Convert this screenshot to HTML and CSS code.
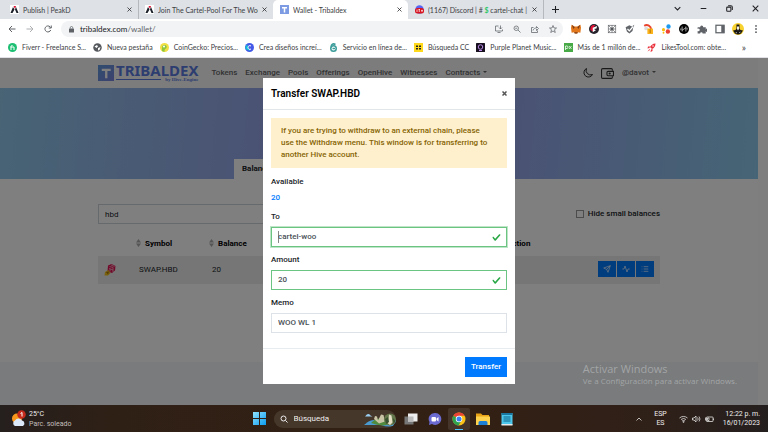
FILE: index.html
```html
<!DOCTYPE html>
<html lang="es">
<head>
  <meta charset="UTF-8">
  <title>Wallet - Tribaldex</title>
  <link rel="stylesheet" href="styles.css">
</head>
<body>
  <!-- browser tabs -->
  <div class="tab-strip">
    <div class="tab">
      <svg class="favicon" viewBox="0 0 18 18"><rect width="18" height="18" fill="#fff"/><path d="M7 2h5l-2 6z" fill="#e31337"/><path d="M6 4l3 5-4 7H1zM12 4l5 12h-4l-3-7z" fill="#1b1f28"/></svg>
      <span class="tab-title">Publish | PeakD</span>
      <button class="tab-close" aria-label="Cerrar"><svg viewBox="0 0 10 10"><path d="M1 1l8 8M9 1l-8 8"/></svg></button>
    </div>
    <div class="tab divided">
      <svg class="favicon" viewBox="0 0 18 18"><rect width="18" height="18" fill="#fff"/><path d="M7 2h5l-2 6z" fill="#e31337"/><path d="M6 4l3 5-4 7H1zM12 4l5 12h-4l-3-7z" fill="#1b1f28"/></svg>
      <span class="tab-title">Join The Cartel-Pool For The Woo</span>
      <button class="tab-close" aria-label="Cerrar"><svg viewBox="0 0 10 10"><path d="M1 1l8 8M9 1l-8 8"/></svg></button>
    </div>
    <div class="tab active">
      <svg class="favicon" viewBox="0 0 18 18"><rect width="18" height="18" fill="#7c9be2"/><path d="M4 4h10v3h-3.500v8h-3v-8H4z" fill="#fff"/></svg>
      <span class="tab-title">Wallet - Tribaldex</span>
      <button class="tab-close" aria-label="Cerrar"><svg viewBox="0 0 10 10"><path d="M1 1l8 8M9 1l-8 8"/></svg></button>
    </div>
    <div class="tab">
      <svg class="favicon" viewBox="0 0 18 18"><circle cx="9" cy="9" r="8.500" fill="#5865f2"/><rect y="6" width="18" height="11" rx="5" fill="#d8141f"/><path d="M4 9v5M7 9h3M8.500 9v5M12 11.500h4M14 9.500v4" stroke="#fff" stroke-width="1.500"/></svg>
      <span class="tab-title">(1167) Discord | # <b class="dollar">$</b> cartel-chat |</span>
      <button class="tab-close" aria-label="Cerrar"><svg viewBox="0 0 10 10"><path d="M1 1l8 8M9 1l-8 8"/></svg></button>
    </div>
    <button class="new-tab" aria-label="Nueva pestaña"><svg viewBox="0 0 10 10"><path d="M5 0v10M0 5h10"/></svg></button>
    <div class="window-controls">
      <button aria-label="Buscar pestañas"><svg viewBox="0 0 10 10"><path d="M1 3l4 4 4-4"/></svg></button>
      <button aria-label="Minimizar"><svg viewBox="0 0 10 10"><path d="M1 5h8"/></svg></button>
      <button aria-label="Restaurar"><svg viewBox="0 0 10 10"><rect x="1" y="3" width="6" height="6" rx="1"/><path d="M3 1h4a2 2 0 0 1 2 2v4"/></svg></button>
      <button aria-label="Cerrar ventana"><svg viewBox="0 0 10 10"><path d="M1 1l8 8M9 1l-8 8"/></svg></button>
    </div>
  </div>

  <!-- address bar -->
  <div class="toolbar">
    <button class="tool" aria-label="Atrás"><svg viewBox="0 0 16 16"><path d="M15 8H2M8 2L2 8l6 6"/></svg></button>
    <button class="tool muted" aria-label="Adelante"><svg viewBox="0 0 16 16"><path d="M1 8h13M8 2l6 6-6 6"/></svg></button>
    <button class="tool" aria-label="Recargar"><svg viewBox="0 0 16 16"><path d="M13.500 10A6 6 0 1 1 12 3.500L14 5.500M14.500 1v5h-5"/></svg></button>
    <div class="omnibox">
      <svg class="lock" viewBox="0 0 10 14"><rect x="0" y="5" width="10" height="8" rx="1" fill="#5f6368"/><path d="M2.500 5V3.500a2.500 2.500 0 0 1 5 0V5" fill="none" stroke="#5f6368" stroke-width="1.500"/></svg>
      <div class="url" role="textbox" aria-label="Dirección">tribaldex.com<span>/wallet/</span></div>
      <button class="tool" aria-label="Instalar"><svg viewBox="0 0 16 16"><path d="M7 2H1v10h14V9M5 15h6M11 1v7M8 5l3 3 3-3"/></svg></button>
      <button class="tool" aria-label="Zoom"><svg viewBox="0 0 16 16"><circle cx="6.500" cy="6.500" r="4.500"/><path d="M10 10l5 5M4.500 6.500h4"/></svg></button>
      <button class="tool" aria-label="Compartir"><svg viewBox="0 0 16 16"><path d="M5 5H1v10h12v-4M4 11c1-4 4-5 7-5V3l4 4-4 4V8"/></svg></button>
      <button class="tool" aria-label="Favorito"><svg viewBox="0 0 16 16"><path d="M8 1l2 5h5l-4 3.500 1.500 5.500L8 12l-4.500 3L5 9.500 1 6h5z"/></svg></button>
    </div>
    <div class="extensions">
      <svg viewBox="0 0 16 16"><path d="M1 1l5 3h4l5-3 1 5-1 8-4-1-1 2H6l-1-2-4 1-1-8z" fill="#e2761b"/><path d="M1 1l5 4-2 3zM15 1l-5 4 2 3zM5 13h6l-1 2H6z" fill="#7a3c18"/></svg>
      <svg viewBox="0 0 16 16"><circle cx="8" cy="8" r="8" fill="#25222b"/><path d="M3 4q3-3 7-2l-3 4-1 6-4-3z" fill="#e31337"/><path d="M6 6l7-3-1 4-4 1 3 2-5 3z" fill="#fff"/></svg>
      <svg viewBox="0 0 16 16" fill="none" stroke="#55585c"><rect x="2" y="2" width="12" height="12"/><circle cx="8" cy="8" r="2" fill="#55585c"/><path d="M2 8h12M8 2v12M3 3l10 10M13 3L3 13"/></svg>
      <svg viewBox="0 0 16 16"><path d="M1 5l6-3 4 2 4-3-2 5-1 5-5 4-4-3z" fill="#62666a"/><path d="M4 8l3 3 6-7" fill="none" stroke="#fff" stroke-width="2"/></svg>
      <svg viewBox="0 0 16 16"><path d="M2 3a7 7 0 0 1 11 6" fill="none" stroke="#e9442e" stroke-width="3"/><circle cx="5" cy="7" r="3" fill="#ddd"/><rect x="7" y="7" width="9" height="9" rx="1" fill="#fbb31b"/><path d="M11.500 8.500v6" stroke="#7a4b00"/></svg>
      <svg viewBox="0 0 16 16"><circle cx="12" cy="4" r="3.500" fill="#1d9bf0"/><circle cx="4" cy="9" r="2.500" fill="#fbbc05"/><circle cx="11" cy="12" r="3.500" fill="#ea4335"/><circle cx="4" cy="14" r="1.500" fill="#fbbc05"/></svg>
      <svg viewBox="0 0 16 16"><circle cx="8" cy="8" r="8" fill="#000"/><path d="M5 4v8M11 4v8M5 10l6-4M3 7v3M13 6v3" stroke="#fff"/></svg>
      <svg viewBox="0 0 16 16"><path d="M1 5h4a2.500 2.500 0 1 1 5 0h4v4a2.500 2.500 0 1 1 0 2v4H9a2 2 0 1 0-4 0H1v-4a2 2 0 1 0 0-3z" fill="#5f6368"/></svg>
      <svg viewBox="0 0 16 16"><rect x="1.500" y="2" width="13" height="12" fill="none" stroke="#5f6368" stroke-width="2"/><path d="M10 2h5v12h-5z" fill="#5f6368"/></svg>
      <svg class="avatar" viewBox="0 0 24 24"><circle cx="12" cy="12" r="12" fill="#f8d22e"/><path d="M9 3h6v8l2 3 5 1-4 6q-6 4-12 0l-4-6 5-1 2-3z" fill="#171514"/><path d="M10 7h4v5l-2 3-2-3zM7 18l3 1-1 2zM17 17l-3 2 2 1z" fill="#f3eee0"/></svg>
      <svg viewBox="0 0 16 16" fill="#5f6368"><circle cx="8" cy="3" r="1.500"/><circle cx="8" cy="8" r="1.500"/><circle cx="8" cy="13" r="1.500"/></svg>
    </div>
  </div>

  <!-- bookmarks -->
  <div class="bookmarks">
    <a href="#"><svg viewBox="0 0 18 18"><circle cx="9" cy="9" r="9" fill="#1dbf73"/><path d="M6 14V7q0-2 3-2M5 8h7v6" fill="none" stroke="#fff" stroke-width="2"/></svg>Fiverr - Freelance S...</a>
    <a href="#"><svg viewBox="0 0 18 18"><circle cx="9" cy="9" r="8.500" fill="#55595e"/><path d="M3 7l5-3 2 3-3 3zM10 10l5-2-2 6-3 1z" fill="#fff"/></svg>Nueva pestaña</a>
    <a href="#"><svg viewBox="0 0 18 18"><circle cx="9" cy="9" r="9" fill="#f2df43"/><path d="M4 16c0-9 0-12 5-12 4 0 6 4 3 7-3 1-3 3-3 7z" fill="#8dc63f"/><circle cx="8" cy="7" r="2" fill="#fff"/></svg>CoinGecko: Precios...</a>
    <a href="#"><svg viewBox="0 0 18 18"><circle cx="9" cy="9" r="9" fill="#4459e8"/><path d="M1 12a9 9 0 0 1 3-9l6 13z" fill="#12bfd5"/><path d="M12 6c-3-2-6 0-6 3s3 5 6 3" fill="none" stroke="#fff" stroke-width="2"/></svg>Crea diseños increí...</a>
    <a href="#"><svg viewBox="0 0 18 18"><circle cx="9" cy="11" r="5.500" fill="none" stroke="#3b9c9a" stroke-width="3"/><path d="M5 9c-2-6 3-9 8-6M7 11h5" fill="none" stroke="#3b9c9a" stroke-width="3"/></svg>Servicio en línea de...</a>
    <a href="#"><svg viewBox="0 0 18 18"><rect width="18" height="18" fill="#ffd91c"/><path d="M4 5h4v3H4zM10 5h4v3h-4zM4 10h4v3H4zM10 10h4v3h-4z" fill="#222"/></svg>Búsqueda CC</a>
    <a href="#"><svg viewBox="0 0 18 18"><rect width="18" height="18" rx="1" fill="#18101f"/><circle cx="9" cy="8" r="4.500" fill="none" stroke="#b78be6" stroke-width="2"/><path d="M6 15h6" stroke="#b78be6" stroke-width="2"/></svg>Purple Planet Music...</a>
    <a href="#"><svg viewBox="0 0 18 18"><rect width="18" height="18" fill="#48a947"/><path d="M3 14V6h3q2 0 2 2.500T6 11H3M10 6l5 6M15 6l-5 6" fill="none" stroke="#fff" stroke-width="1.500"/></svg>Más de 1 millón de...</a>
    <a href="#"><svg viewBox="0 0 18 18"><path d="M17 1c-6 0-9 4-11 7l4 4c4-2 7-5 7-11zM6 7H2l-1 4 4-1zM11 12v4l-4 2 1-5zM5 12l-4 5 5-3z" fill="#e9313c"/><circle cx="12" cy="6" r="1.500" fill="#fff"/></svg>LikesTool.com: obte...</a>
    <button class="more" aria-label="Más marcadores">»</button>
  </div>

  <!-- web page -->
  <div class="viewport">
    <div class="site">
      <header class="site-header">
        <div class="container nav">
          <a class="brand" href="#">
            <svg viewBox="0 0 34 34"><defs><linearGradient id="brandFill" x1="0" y1="0" x2="1" y2="1"><stop offset="0" stop-color="#5f9be0"/><stop offset="1" stop-color="#7c84dc"/></linearGradient></defs><rect width="34" height="34" fill="url(#brandFill)"/><path d="M8 8h19v5h-7v15h-5V13H8z" fill="#fff"/></svg>
            <span class="brand-text">
              <span class="brand-name">TRIBALDEX</span>
              <span class="brand-sub">by Hive-Engine</span>
            </span>
          </a>
          <nav class="links">
            <a href="#">Tokens</a>
            <a href="#">Exchange</a>
            <a href="#">Pools</a>
            <a href="#">Offerings</a>
            <a href="#">OpenHive</a>
            <a href="#">Witnesses</a>
            <a class="caret" href="#">Contracts</a>
          </nav>
          <div class="account">
            <button aria-label="Dark mode"><svg class="moon" viewBox="0 0 20 20"><path d="M7 1a9 9 0 1 0 12 12A9 9 0 0 1 7 1z"/></svg></button>
            <button aria-label="Wallet"><svg class="wallet" viewBox="0 0 24 20"><path d="M21 5V3q0-2-2-2H3Q1 1 1 3v14q0 2 2 2h16q2 0 2-2v-2"/><path d="M23 6H13q-2 0-2 2v4q0 2 2 2h10z"/><circle cx="16" cy="10" r="1"/></svg></button>
            <a class="caret" href="#">@davot</a>
          </div>
        </div>
      </header>

      <div class="banner">
        <div class="page-tabs">
          <a class="page-tab" href="#">Balances</a>
        </div>
      </div>

      <main class="container wallet-page">
        <div class="filters">
          <input class="filter-input" type="text" value="hbd" aria-label="Filter tokens">
          <label class="small-toggle"><input type="checkbox"> Hide small balances</label>
        </div>
        <table class="balances">
          <thead>
            <tr>
              <th class="col-icon"></th>
              <th class="col-symbol"><svg class="sort" viewBox="0 0 10 16"><path d="M5 0l5 7H0zM0 9h10l-5 7z"/></svg>Symbol</th>
              <th class="col-balance"><svg class="sort" viewBox="0 0 10 16"><path d="M5 0l5 7H0zM0 9h10l-5 7z"/></svg>Balance</th>
              <th class="col-action">Action</th>
            </tr>
          </thead>
          <tbody>
            <tr>
              <td><svg class="token" viewBox="0 0 24 24"><path d="M8 3l7-3 8 4-1 9-6 5-9-3z" fill="#e31354"/><path d="M11 5l7 2M10 9l8 3M14 2l7 3M18 7v9M12 9v6" stroke="#f7c9d6" stroke-width="1.500"/><path d="M2 16l7-4 4 6-5 5H1z" fill="#f5c21b"/><path d="M4 16l6-1-2 6z" fill="#a97600"/></svg></td>
              <td class="symbol">SWAP.HBD</td>
              <td class="balance">20</td>
              <td class="actions">
                <button aria-label="Transfer"><svg viewBox="0 0 24 24"><path d="M22 2L11 13M22 2l-7 20-4-9-9-4z"/></svg></button>
                <button aria-label="Activity"><svg viewBox="0 0 24 24"><path d="M1 12h5l3-9 6 18 3-9h5"/></svg></button>
                <button aria-label="Details"><svg viewBox="0 0 24 24"><path d="M8 5h14M8 12h14M8 19h14M2 5h2M2 12h2M2 19h2"/></svg></button>
              </td>
            </tr>
          </tbody>
        </table>
      </main>
      <footer class="site-footer"></footer>
    </div>
    <div class="scrollbar"></div>

    <div class="backdrop">
      <form class="modal" role="dialog" aria-labelledby="modalTitle">
        <div class="modal-header">
          <h5 id="modalTitle">Transfer SWAP.HBD</h5>
          <button class="close" type="button" aria-label="Close"><svg viewBox="0 0 10 10"><path d="M1 1l8 8M9 1l-8 8"/></svg></button>
        </div>
        <div class="modal-body">
          <div class="alert">If you are trying to withdraw to an external chain, please use the Withdraw menu. This window is for transferring to another Hive account.</div>
          <div class="form-group">
            <span class="label">Available</span>
            <a class="available" href="#">20</a>
          </div>
          <div class="form-group">
            <label for="to">To</label>
            <div class="field valid focused">
              <input id="to" type="text" value="cartel-woo">
              <svg viewBox="0 0 8 8"><path d="M2.300 6.730L.6 4.530c-.4-1.040.46-1.400 1.100-.8l1.100 1.400 3.400-3.800c.6-.63 1.600-.27 1.200.7l-4 4.600c-.43.500-.8.400-1.100.1z"/></svg>
            </div>
          </div>
          <div class="form-group">
            <label for="amount">Amount</label>
            <div class="field valid">
              <input id="amount" type="text" value="20">
              <svg viewBox="0 0 8 8"><path d="M2.300 6.730L.6 4.530c-.4-1.040.46-1.400 1.100-.8l1.100 1.400 3.400-3.800c.6-.63 1.600-.27 1.200.7l-4 4.600c-.43.500-.8.400-1.100.1z"/></svg>
            </div>
          </div>
          <div class="form-group">
            <label for="memo">Memo</label>
            <div class="field">
              <input id="memo" type="text" value="WOO WL 1">
            </div>
          </div>
        </div>
        <div class="modal-footer">
          <button class="btn-primary" type="button">Transfer</button>
        </div>
      </form>
    </div>

    <div class="activation">
      <div class="activation-title">Activar Windows</div>
      <div>Ve a Configuración para activar Windows.</div>
    </div>
  </div>

  <!-- taskbar -->
  <div class="taskbar">
    <div class="weather">
      <svg viewBox="0 0 30 34"><circle cx="12" cy="17" r="10" fill="#f7981d"/><path d="M8 32a6 6 0 0 1 0-11 8 8 0 0 1 14 0 6 6 0 0 1 2 11z" fill="#dbe9fb"/><circle cx="21" cy="9" r="8.500" fill="#c42b1c"/><path d="M19 7l3-2v8" fill="none" stroke="#fff" stroke-width="2"/></svg>
      <div>25°C<br><span class="sky">Parc. soleado</span></div>
    </div>
    <div class="apps">
      <svg class="start" viewBox="0 0 26 26"><defs><linearGradient id="startFill" x1="0" y1="0" x2="1" y2="1"><stop offset="0" stop-color="#8fe3ff"/><stop offset="1" stop-color="#0a9bf0"/></linearGradient></defs><path d="M0 0h12v12H0zM14 0h12v12H14zM0 14h12v12H0zM14 14h12v12H14z" fill="url(#startFill)"/></svg>
      <div class="search">
        <svg class="lens" viewBox="0 0 16 16"><circle cx="7" cy="7" r="5"/><path d="M11 11l4 4"/></svg>
        <input type="text" value="Búsqueda" aria-label="Búsqueda">
        <svg class="scene" viewBox="0 0 64 32"><path d="M0 28c10-10 20-12 32-10h32v10q-14 6-30 0z" fill="#4b9bd3"/><path d="M14 24q14-14 24-6l10 9q-14 5-34-3z" fill="#4f8a3d"/><path d="M20 16l2-6 4 1 2 8 6-12 5 1 3 13-12 4z" fill="#c9c4a5"/><circle cx="52" cy="17" r="12" fill="#65784b"/><path d="M48 25l2-18 5 2 2 14-5 5z" fill="#e5dfc6"/><path d="M42 16l6-4 2 10-6 4zM58 14l5 6-4 6z" fill="#38512e"/><path d="M3 10q5-7 10-1l4 2H2z" fill="#9bd0f2"/></svg>
      </div>
      <div class="app"><svg viewBox="0 0 28 26"><rect x="1" y="8" width="18" height="16" fill="#777"/><rect x="8" y="2" width="19" height="16" fill="#eee"/><path d="M8 8h11v10H8z" fill="#bbb"/></svg></div>
      <div class="app"><svg viewBox="0 0 28 26"><path d="M14 1a12 12 0 1 1-6 22l-6 2 1-6A12 12 0 0 1 14 1z" fill="#6a6ad0"/><rect x="7" y="9" width="9" height="9" rx="2" fill="#fff"/><path d="M17 12l4-3v9l-4-3z" fill="#fff"/></svg></div>
      <div class="app running"><svg viewBox="0 0 28 28"><circle cx="14" cy="14" r="13" fill="#fbc116"/><path d="M14 14L2.700 7.500A13 13 0 0 1 25.300 7.500H14z" fill="#ea4335"/><path d="M2.700 7.500A13 13 0 0 0 13 27l6-10-5-3z" fill="#2fa14f"/><circle cx="14" cy="14" r="6.500" fill="#fff"/><circle cx="14" cy="14" r="5" fill="#3b82f0"/></svg></div>
      <div class="app"><svg viewBox="0 0 28 26"><path d="M0 2h10l3 3h13v6H0z" fill="#e8a317"/><path d="M0 8h28v17H0z" fill="#ffd24d"/><path d="M5 25v-5q0-3 3-3h12q3 0 3 3v5z" fill="#1c7fd6"/></svg></div>
      <div class="app"><svg viewBox="0 0 28 28"><rect x="3" y="2" width="22" height="24" rx="1" fill="#4cc6ea"/><path d="M3 2h22v4H3z" fill="#1a78a0"/><path d="M7 10h14M7 14h14M7 18h14" stroke="#0d6488" stroke-width="2"/><path d="M3 24h22v3H3z" fill="#e9e9e9"/></svg></div>
    </div>
    <div class="tray">
      <svg class="chevron" viewBox="0 0 12 12"><path d="M1 9l5-5 5 5"/></svg>
      <div class="lang">ESP<br>ES</div>
      <div class="status">
        <svg viewBox="0 0 18 16"><path d="M1 6a12 12 0 0 1 16 0M4 9a8 8 0 0 1 10 0M6 12a5 5 0 0 1 6 0"/><circle cx="9" cy="14" r="1"/></svg>
        <svg viewBox="0 0 18 16"><path d="M1 6h3l4-4v12l-4-4H1zM11 5q3 3 0 6M14 3q4 5 0 10"/></svg>
        <svg viewBox="0 0 18 16"><rect x="3" y="4" width="13" height="9" rx="1"/><path d="M17 7v3M5 6h3v5H5zM1 5v6"/></svg>
      </div>
      <div class="clock">12:22 p. m.<br>16/01/2023</div>
    </div>
  </div>
</body>
</html>
```

FILE: styles.css
```css
* {
  box-sizing: border-box;
}

body {
  margin: 0;
  height: 100vh;
  display: flex;
  flex-direction: column;
  overflow: hidden;
  font-family: Roboto, "Noto Sans", sans-serif;
  font-size: 7px;
  line-height: 10px;
  color: #3c4043;
}

button {
  display: flex;
  align-items: center;
  justify-content: center;
  padding: 0;
  border: 0;
  background: none;
  color: inherit;
  font: inherit;
}

input {
  font: inherit;
  color: inherit;
}

a {
  color: inherit;
  text-decoration: none;
}

svg {
  display: block;
  flex: none;
}

/* tabs */
.tab-strip {
  display: flex;
  height: 19px;
  padding-left: 3px;
  background: #dee1e6;
  font-family: Lato, sans-serif;
}

.tab {
  flex: 0 1 135px;
  display: flex;
  align-items: center;
  gap: 4px;
  min-width: 0;
  padding: 0 6px 0 7px;
}

.tab.active {
  background: #fff;
  border-radius: 5px 5px 0 0;
}

.tab.divided {
  box-shadow: inset 1px 0 #b5b9be;
}

.tab-title {
  flex: 1;
  overflow: hidden;
  white-space: nowrap;
}

.dollar {
  color: #2fc76b;
}

.favicon {
  width: 9px;
  height: 9px;
}

.tab-close svg {
  width: 5px;
  height: 5px;
}

.tab-close svg,
.new-tab svg,
.window-controls svg {
  fill: none;
  stroke: #202124;
  stroke-width: 1.5;
}

.new-tab {
  width: 24px;
  border-left: 1px solid #b5b9be;
}

.new-tab svg {
  width: 7px;
  height: 7px;
}

.window-controls {
  display: flex;
  margin-left: auto;
  height: 16px;
}

.window-controls button {
  width: 26px;
}

.window-controls svg {
  width: 7px;
  height: 7px;
}

/* address bar */
.toolbar {
  display: flex;
  align-items: center;
  height: 20px;
  padding: 0 3px;
  background: #fff;
}

.tool {
  width: 18px;
  height: 16px;
}

.tool svg {
  width: 8px;
  height: 8px;
  fill: none;
  stroke: #5f6368;
  stroke-width: 2;
}

.tool.muted {
  opacity: 0.5;
}

.omnibox {
  flex: 1;
  display: flex;
  align-items: center;
  height: 16px;
  margin: 0 4px;
  padding: 0 1px 0 8px;
  border-radius: 8px;
  background: #f1f3f4;
}

.omnibox .tool svg {
  stroke-width: 1.5;
}

.lock {
  width: 5px;
  height: 7px;
  margin-right: 6px;
}

.url {
  flex: 1;
  font-family: Lato, sans-serif;
  font-size: 8px;
  color: #202124;
}

.url span {
  color: #5f6368;
}

.extensions {
  display: flex;
  align-items: center;
}

.extensions svg {
  width: 10px;
  height: 10px;
  margin: 0 4px;
}

.extensions .avatar {
  width: 12px;
  height: 12px;
  margin: 0 3px;
}

/* bookmarks */
.bookmarks {
  display: flex;
  align-items: center;
  gap: 7px;
  height: 19px;
  padding: 0 22px 2px 8px;
  background: #fff;
  border-bottom: 1px solid #dfe1e5;
  font-family: Lato, sans-serif;
  white-space: nowrap;
}

.bookmarks a {
  display: flex;
  align-items: center;
  gap: 5px;
}

.bookmarks svg {
  width: 9px;
  height: 9px;
}

.more {
  margin-left: auto;
  font-size: 10px;
}

/* web page */
.viewport {
  position: relative;
  flex: 1;
  display: flex;
  min-height: 0;
  font-size: 8px;
  font-weight: 500;
  line-height: 12px;
  color: #212529;
}

.site {
  flex: 1;
  display: flex;
  flex-direction: column;
  background: #fff;
}

.scrollbar {
  width: 10px;
  background: #fcfcfc;
}

.container {
  width: 100%;
  max-width: 562px;
  margin: 0 auto;
}

.site-header {
  background: #f8f9fb;
}

.nav {
  display: flex;
  align-items: center;
  height: 30px;
  color: #666;
}

.brand {
  display: flex;
  align-items: center;
  gap: 2px;
  margin-right: 13px;
  color: #5a7be0;
}

.brand svg {
  width: 16px;
  height: 16px;
}

.brand-text {
  display: flex;
  flex-direction: column;
}

.brand-name {
  font-family: "Noto Sans", sans-serif;
  font-size: 15px;
  font-weight: 700;
  line-height: 13px;
}

.brand-sub {
  display: flex;
  align-items: center;
  gap: 4px;
  font-family: "Liberation Serif", serif;
  font-size: 5px;
  font-weight: 700;
  line-height: 5px;
}

.brand-sub::before {
  content: "";
  flex: 1;
  border-top: 1px solid;
}

.links {
  display: flex;
  gap: 8px;
}

.caret::after {
  content: "";
  display: inline-block;
  margin-left: 3px;
  vertical-align: 2px;
  border: 2px solid transparent;
  border-top-color: currentColor;
  border-bottom: 0;
}

.account {
  display: flex;
  align-items: center;
  gap: 8px;
  margin-left: auto;
  padding-right: 4px;
}

.account svg {
  fill: none;
  stroke: #333;
  stroke-width: 2;
}

.moon {
  width: 10px;
  height: 10px;
}

.wallet {
  width: 13px;
  height: 11px;
}

.banner {
  display: flex;
  align-items: flex-end;
  justify-content: center;
  height: 91px;
  background: linear-gradient(95deg, #90c8ea, #969ee8 42%, #969ee8 62%, #8ccaec);
}

.page-tabs {
  width: 290px;
  display: flex;
}

.page-tab {
  padding: 4px 8px;
  background: #fff;
  font-weight: 700;
}

.wallet-page {
  flex: 1;
  padding-top: 25px;
}

.filters {
  display: flex;
  align-items: center;
  justify-content: space-between;
}

.filter-input {
  width: 45%;
  height: 20px;
  padding: 0 6px;
  border: 1px solid #ced4da;
  background: #fff;
  font-weight: 400;
}

.small-toggle {
  display: flex;
  align-items: center;
  gap: 4px;
}

.small-toggle input {
  appearance: none;
  width: 8px;
  height: 8px;
  margin: 0;
  border: 1px solid #999;
}

.balances {
  width: 100%;
  margin-top: 7px;
  border-collapse: collapse;
  table-layout: fixed;
}

.balances th {
  height: 25px;
  padding: 0;
  text-align: left;
  font-weight: 700;
  color: #000;
}

.balances td {
  height: 28px;
  padding: 0;
  background: #ececec;
}

.balances td:first-child {
  padding-left: 6px;
}

.col-icon {
  width: 38px;
}

.col-symbol {
  width: 13%;
}

.sort {
  display: inline-block;
  width: 5px;
  height: 8px;
  margin-right: 4px;
  vertical-align: middle;
  fill: #aaa;
}

.col-action {
  width: 153px;
}

.token {
  width: 12px;
  height: 12px;
}

.balances .symbol,
.balances .balance {
  padding-left: 3px;
  font-weight: 400;
}

.balances .actions {
  padding-right: 6px;
}

.actions button {
  display: inline-flex;
  width: 18px;
  height: 16px;
  margin-left: 1px;
  background: #007bff;
}

.actions {
  font-size: 0;
  text-align: right;
}

.actions svg {
  width: 8px;
  height: 8px;
  fill: none;
  stroke: #fff;
  stroke-width: 2;
}

.site-footer {
  height: 43px;
  background: #f3f6f9;
}

/* transfer dialog */
.backdrop {
  position: absolute;
  inset: 0;
  display: flex;
  align-items: flex-start;
  justify-content: center;
  padding: 20px 0 0 10px;
  background: rgba(0, 0, 0, 0.5);
}

.modal {
  width: 252px;
  background: #fff;
}

.modal-header {
  display: flex;
  align-items: center;
  justify-content: space-between;
  height: 32px;
  padding: 0 8px;
  border-bottom: 1px solid #e3e6e9;
}

.modal-header h5 {
  margin: 0;
  font-size: 10px;
  font-weight: 600;
  color: #000;
}

.close svg {
  width: 5px;
  height: 5px;
  fill: none;
  stroke: #555;
  stroke-width: 3;
}

.modal-body {
  padding: 8px;
}

.alert {
  margin-bottom: 8px;
  padding: 7px 14px 7px 10px;
  background: #fff0cd;
  color: #856404;
}

.form-group {
  display: flex;
  flex-direction: column;
  gap: 4px;
  margin-bottom: 7px;
}

.available {
  color: #007bff;
}

.field {
  display: flex;
  align-items: center;
  height: 20px;
  padding: 0 5px 0 6px;
  border: 1px solid #dde2e8;
  color: #495057;
}

.field input {
  flex: 1;
  min-width: 0;
  padding: 0;
  border: 0;
  outline: 0;
  background: none;
}

.field svg {
  width: 9px;
  height: 9px;
  fill: #28a745;
}

.field.valid {
  border-color: #6cc482;
}

.field.focused {
  box-shadow: 0 0 0 1px #bfe5c8;
}

/* text cursor */
.field.focused::before {
  content: "";
  width: 1px;
  height: 12px;
  margin-right: -1px;
  background: #888;
}

.modal-footer {
  display: flex;
  justify-content: flex-end;
  padding: 8px 8px 7px;
  border-top: 1px solid #e9ecef;
}

.btn-primary {
  height: 20px;
  padding: 0 6px;
  background: #007bff;
  color: #fff;
}

.activation {
  position: absolute;
  right: 31px;
  bottom: 18px;
  font-family: "Open Sans", sans-serif;
  font-size: 8px;
  font-weight: 400;
  color: #a3a5a7;
}

.activation-title {
  font-size: 11px;
}

/* taskbar */
.taskbar {
  display: grid;
  grid-template-columns: 1fr auto 1fr;
  align-items: center;
  height: 27px;
  padding: 0 8px 0 11px;
  background: linear-gradient(90deg, #251f1e, #2f2015 15%, #332014 60%, #2f2018 85%, #241f1f);
  color: #eee;
}

.weather {
  display: flex;
  align-items: center;
  gap: 3px;
}

.weather svg {
  width: 15px;
  height: 17px;
}

.sky {
  color: #c4bfbb;
}

.apps {
  display: flex;
  align-items: center;
}

.start {
  width: 13px;
  height: 13px;
  margin-right: 8px;
}

.search {
  display: flex;
  align-items: center;
  width: 122px;
  height: 18px;
  margin-right: 3px;
  padding-left: 6px;
  border-radius: 9px;
  overflow: hidden;
  background: #46372b;
}

.search input {
  flex: 1;
  min-width: 0;
  padding: 0 6px;
  border: 0;
  background: none;
  font-size: 8px;
}

.lens {
  width: 8px;
  height: 8px;
  fill: none;
  stroke: #eee;
  stroke-width: 2;
}

.scene {
  width: 32px;
  height: 16px;
}

.app {
  position: relative;
  display: flex;
  align-items: center;
  justify-content: center;
  width: 22px;
  height: 22px;
  margin: 0 1px;
}

.app svg {
  width: 14px;
  height: 14px;
}

.running {
  border-radius: 2px;
  background: #44342a;
}

.running::after {
  content: "";
  position: absolute;
  bottom: 0;
  width: 8px;
  height: 1px;
  background: #4cc2ff;
}

.tray {
  display: flex;
  align-items: center;
  justify-content: flex-end;
  text-align: center;
}

.chevron {
  width: 6px;
  height: 6px;
  margin-right: 12px;
}

.tray svg {
  fill: none;
  stroke: #eee;
  stroke-width: 1.5;
}

.lang {
  margin-right: 12px;
  line-height: 9px;
}

.status {
  display: flex;
  gap: 4px;
  margin-right: 9px;
}

.status svg {
  width: 9px;
  height: 8px;
}

.clock {
  text-align: right;
  line-height: 9px;
}
```
